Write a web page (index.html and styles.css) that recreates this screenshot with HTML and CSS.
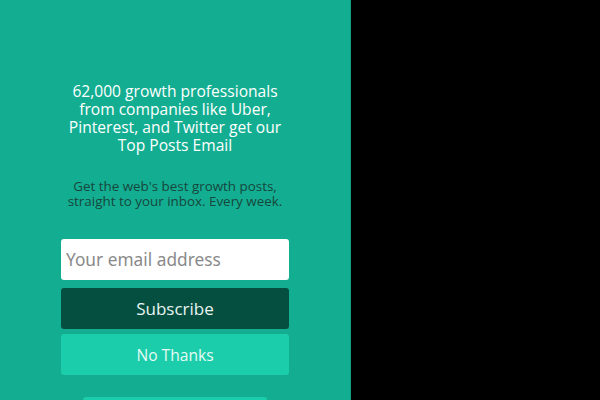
FILE: index.html
```html
<!DOCTYPE html>
<html>
<head>
<meta charset="utf-8">
<link rel="stylesheet" href="styles.css">
</head>
<body>
<div class="page">
  <div class="panel">
    <h1 class="title">62,000 growth professionals from companies like Uber, Pinterest, and Twitter get our Top Posts Email</h1>
    <p class="sub">Get the web's best growth posts, straight to your inbox. Every week.</p>
    <form class="form">
      <input class="email" type="text" placeholder="Your email address">
      <button class="btn subscribe" type="button">Subscribe</button>
      <button class="btn nothanks" type="button">No Thanks</button>
      <div class="footer-bar"></div>
    </form>
  </div>
  <div class="rest"></div>
</div>
</body>
</html>
```
FILE: styles.css
```css
html, body {
  margin: 0;
  padding: 0;
  height: 100%;
  background: #000;
  overflow: hidden;
}
.page {
  display: flex;
  height: 400px;
}
.panel {
  width: 350px;
  border-right: 1px solid #0f9e84;
  background: #13ae91;
  display: flex;
  flex-direction: column;
  align-items: center;
  font-family: "Open Sans", sans-serif;
  padding-top: 82px;
  box-sizing: content-box;
}
.rest {
  flex: 1;
  background: #000;
}
.title {
  margin: 0;
  width: 240px;
  text-align: center;
  color: #fff;
  font-weight: 400;
  font-size: 15.6px;
  line-height: 18px;
}
.sub {
  margin: 25px 0 0;
  width: 240px;
  text-align: center;
  color: #17463d;
  font-size: 13.4px;
  line-height: 15px;
}
.form {
  margin-top: 30px;
  width: 228px;
  display: flex;
  flex-direction: column;
}
.email {
  height: 41px;
  box-sizing: border-box;
  border: none;
  border-radius: 3px;
  background: #fff;
  padding: 0 5px;
  font-family: "Noto Sans", sans-serif;
  font-size: 17.3px;
  color: #333;
  outline: none;
}
.email::placeholder {
  color: #8a8a8a;
}
.btn {
  height: 41px;
  border: none;
  border-radius: 3px;
  font-family: "Open Sans", sans-serif;
  font-size: 17px;
  padding: 0;
}
.subscribe {
  margin-top: 8px;
  background: #054f41;
  color: #e8f5f1;
}
.nothanks {
  margin-top: 5px;
  background: #1ccdab;
  color: #e6fbf6;
  font-size: 15.6px;
}
.footer-bar {
  margin: 22px auto 0;
  width: 184px;
  height: 10px;
  background: #1ccdab;
  border-radius: 3px;
}
```
